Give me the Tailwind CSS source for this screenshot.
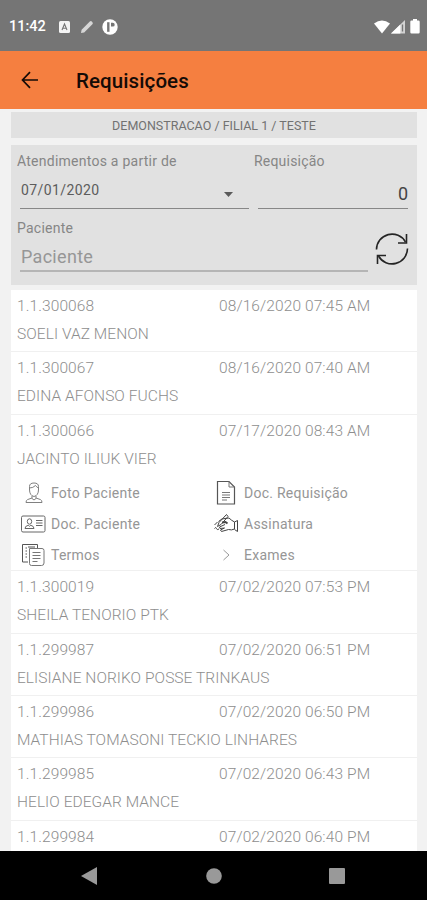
<!DOCTYPE html>
<html lang="pt-BR">
<head>
    <meta charset="UTF-8">
    <meta name="viewport" content="width=device-width, initial-scale=1">
    <title>Requisições</title>
    <script src="https://cdn.jsdelivr.net/npm/@tailwindcss/browser@4"></script>
</head>
<body class="bg-[#f2f2f2] font-['Roboto',sans-serif]">

<div class="w-[427px] h-[900px] flex flex-col overflow-hidden">
    <!-- Status bar -->
    <div class="h-[51px] shrink-0 bg-[#757575] flex items-center pl-[9px] pr-[6px] pt-[2px] text-white">
        <span class="w-[50px] text-[14.5px] font-medium">11:42</span>
        <svg class="w-[11px] h-[12px]" viewBox="0 0 11 12">
            <rect width="11" height="12" rx="1.5" fill="#f4f4f4"/>
            <path d="M3 9 5.5 3 8 9M4 7.2h3" fill="none" stroke="#757575" stroke-width="1.1"/>
        </svg>
        <svg class="w-[14px] h-[14px] ml-[10px]" viewBox="0 0 14 14">
            <path d="M1 13l.6-3.2L9.8 1.6a1.4 1.4 0 0 1 2 0l.6.6a1.4 1.4 0 0 1 0 2L4.2 12.4z" fill="#d6d6d6"/>
        </svg>
        <svg class="w-[16px] h-[16px] ml-[8px]" viewBox="0 0 16 16">
            <circle cx="8" cy="8" r="7.7" fill="#fff"/>
            <path d="M6.3 3.2v9.6" stroke="#757575" stroke-width="2.4"/>
            <path d="M9 3.8h1.8a1.9 1.9 0 0 1 0 3.8H9z" fill="#757575"/>
        </svg>
        <svg class="w-[16px] h-[14px] ml-auto" viewBox="0 0 16 14">
            <path d="M0 3.5Q8-2.5 16 3.5L8 13.5z" fill="#fff"/>
        </svg>
        <svg class="w-[14px] h-[14px] ml-px" viewBox="0 0 14 14">
            <path d="M14 0v13.5H0z" fill="#d2d2d2"/>
            <path d="M9.3 4.5V13.5H0z" fill="#fff"/>
            <path d="M11.5 4.5v7" stroke="#757575" stroke-width="1.3"/>
        </svg>
        <svg class="w-[10px] h-[15px] ml-[5px] mr-px" viewBox="0 0 10 15">
            <path d="M3 0h4v1.5h1.5q1.2 0 1.2 1.2v10.5q0 1.3-1.2 1.3h-7Q.3 14.5.3 13.2V2.7q0-1.2 1.2-1.2H3z" fill="#fff"/>
        </svg>
    </div>

    <!-- Toolbar -->
    <header class="h-[58px] shrink-0 bg-[#f57f40] flex items-center pl-[21px] text-[#150b06]">
        <svg class="w-[18px] h-[18px]" viewBox="0 0 18 18" fill="none" stroke="currentColor" stroke-width="1.7">
            <path d="M17 9H1.8M9 1.2 1.5 9 9 16.8"/>
        </svg>
        <h1 class="ml-[37px] pt-[2px] text-[20.5px] leading-6 font-medium tracking-[0.1px]">Requisições</h1>
    </header>

    <main class="flex-1 min-h-0 overflow-hidden flex flex-col pt-[3px] pl-[11px] pr-[10px]">
        <div class="h-[26px] shrink-0 bg-[#e1e1e1] text-center text-[12.5px] leading-[27px] text-[#727272]">DEMONSTRACAO / FILIAL 1 / TESTE</div>

        <!-- Filters -->
        <section class="mt-[7px] h-[140px] shrink-0 bg-[#e1e1e1] px-[5px] text-[14px] text-[#868686]">
            <div class="flex h-[64px]">
                <div class="w-[237px] pt-[6px]">
                    <div class="pl-px leading-5 tracking-[0.25px]">Atendimentos a partir de</div>
                    <div class="ml-1 mt-[4px] w-[229px] h-[34px] border-b border-[#878787] flex items-start justify-between pr-4">
                        <span class="pl-px leading-[31px] tracking-[0.4px] text-[#5c5c5c]">07/01/2020</span>
                        <svg class="w-[9px] h-[5px] mt-[17px]" viewBox="0 0 9 5"><path d="M0 0h9L4.500 5z" fill="#5a5a5a"/></svg>
                    </div>
                </div>
                <div class="flex-1 pt-[6px]">
                    <div class="pl-px leading-5 tracking-[0.2px]">Requisição</div>
                    <div class="ml-[5px] mt-[4px] w-[150px] h-[34px] border-b border-[#878787] text-right text-[18px] leading-[37px] text-[#444]">0</div>
                </div>
            </div>
            <div class="flex">
                <div class="w-[352px] pt-[9px]">
                    <div class="pl-px leading-5 tracking-[0.25px]">Paciente</div>
                    <div class="ml-1 pl-px h-[34px] border-b-2 border-[#b5b5b5] text-[18px] leading-[38px] tracking-[0.3px] text-[#969696]">Paciente</div>
                </div>
                <svg class="w-[34px] h-[34px] ml-[7px] mt-[23px]" viewBox="0 0 34 34" fill="none" stroke="#252525" stroke-width="1.6">
                    <path d="M1.5 17.500A15.500 15.500 0 0 1 30.500 10M32.500 16.500A15.500 15.500 0 0 1 3.500 24"/>
                    <path d="M31.500 2v9h-8.500M2.500 32v-8.500h8.500"/>
                </svg>
            </div>
        </section>

        <!-- List -->
        <ul id="list" class="mt-[5px] bg-white text-[15.5px] font-light text-[#8e8e8e]"></ul>
    </main>

    <!-- Android navigation -->
    <nav class="h-[49px] shrink-0 bg-black flex items-center pl-[81px]">
        <svg class="w-[17px] h-[18px]" viewBox="0 0 17 18"><path d="M16 0v18L0 9z" fill="#999"/></svg>
        <svg class="w-[16px] h-[16px] ml-[108px]" viewBox="0 0 16 16"><circle cx="8" cy="8" r="7.8" fill="#999"/></svg>
        <svg class="w-[16px] h-[16px] ml-[107px]" viewBox="0 0 16 16"><rect width="16" height="16" rx="1" fill="#999"/></svg>
    </nav>
</div>

<!-- Actions of the open item -->
<template id="actions">
    <div class="h-[94px] pt-[1.5px] grid grid-cols-[193px_1fr] auto-rows-[31px] items-center pl-[9px] text-[14px] font-normal tracking-[0.25px] text-[#969696]">
        <div class="flex items-center gap-[5px]">
            <svg class="w-[26px] h-[24px]" viewBox="0 0 26 24" fill="none" stroke="#808080">
                <path d="M9.5 9V5.5Q9.5 2 14 2t4.500 3.500V9M9.500 7q3.500 0 6-2.500Q16.500 6 18.500 7M9.500 8.500q0 6 4.500 7 4.500-1 4.500-7M12 15v2.500l2 1.500 2-1.500V15M12 17l-4.500 1.600Q6 19.300 6 21.500h16q0-2.200-1.500-2.900L16 17"/>
            </svg>
            <span>Foto Paciente</span>
        </div>
        <div class="flex items-center gap-[5px]">
            <svg class="w-[26px] h-[26px]" viewBox="0 0 26 26" fill="none" stroke="#777">
                <path d="M4.500 1.500H16l5.500 5.500v17h-17z" stroke="#555" stroke-width="1.2"/>
                <path d="M16 1.500v5.500h5.500M9 12.500h8M9 15h8M9 17.500h8M9 20h5"/>
            </svg>
            <span>Doc. Requisição</span>
        </div>
        <div class="flex items-center gap-[5px]">
            <svg class="w-[26px] h-[20px]" viewBox="0 0 26 20" fill="none" stroke="#666">
                <rect x="1.5" y="2" width="23.5" height="16" rx="1.5"/>
                <ellipse cx="9.5" cy="7.5" rx="2.2" ry="2.7"/>
                <path d="M5 14.500q0-2.500 3.200-3.200l1.300 1 1.300-1q3.200.7 3.200 3.200zM16 6.500h6.500M16 9h6.500M16 11.500h6.500"/>
            </svg>
            <span>Doc. Paciente</span>
        </div>
        <div class="flex items-center gap-[5px]">
            <svg class="w-[26px] h-[22px]" viewBox="0 0 26 22" fill="none" stroke="#444">
                <!-- pen and scribble -->
                <path d="M13.500 1.500 6 9.500l-1.500 4 3.500-2 7-8zM1.500 12l3-3M1.500 15.500q1.500-2 2 0t2.500.5"/>
                <!-- hand -->
                <path d="M5.500 8.500Q9 5 12 5.500l4-.5q2.500 2.500 5.500 4v7q-3 1.500-6 .5l-7 2-1-1.500 4-2-4.500.5-.5-1.500L12 11.500"/>
                <path d="M9 9.500l3.500-.5 2 1.500" stroke-width="1.800"/>
                <path d="M21.500 9l3-1.500v11l-3-2"/>
            </svg>
            <span>Assinatura</span>
        </div>
        <div class="flex items-center gap-[5px]">
            <svg class="w-[26px] h-[24px]" viewBox="0 0 26 24" fill="none" stroke="#777">
                <path d="M8 19H2.500V1.500h15V5M5.500 5H7M5.500 8H7M5.500 11H7M5.500 14H7M8 4h7" stroke="#555"/>
                <path d="M9.500 5.500H22q2 0 2 2V20q0 2.500-2.500 2.500H11.500q-2 0-2-2zM12.500 9.500h8M12.500 12.500h8M12.500 15.500h8M12.500 18.500h5"/>
            </svg>
            <span>Termos</span>
        </div>
        <div class="flex items-center gap-[5px]">
            <svg class="w-[26px] h-[14px]" viewBox="0 0 26 14" fill="none" stroke="#999"><path d="M10.500 2l5.500 5-5.500 5"/></svg>
            <span>Exames</span>
        </div>
    </div>
</template>

<script>
    const items = [
        { code: "1.1.300068", date: "08/16/2020 07:45 AM", name: "SOELI VAZ MENON" },
        { code: "1.1.300067", date: "08/16/2020 07:40 AM", name: "EDINA AFONSO FUCHS" },
        { code: "1.1.300066", date: "07/17/2020 08:43 AM", name: "JACINTO ILIUK VIER", open: true },
        { code: "1.1.300019", date: "07/02/2020 07:53 PM", name: "SHEILA TENORIO PTK" },
        { code: "1.1.299987", date: "07/02/2020 06:51 PM", name: "ELISIANE NORIKO POSSE TRINKAUS" },
        { code: "1.1.299986", date: "07/02/2020 06:50 PM", name: "MATHIAS TOMASONI TECKIO LINHARES" },
        { code: "1.1.299985", date: "07/02/2020 06:43 PM", name: "HELIO EDEGAR MANCE" },
        { code: "1.1.299984", date: "07/02/2020 06:40 PM", name: "" }
    ];

    document.getElementById('list').innerHTML = items.map(item => `
        <li class="border-b border-[#f0f0f0]">
            <div class="h-[61.4px] pl-[6px] pt-[2px]">
                <div class="flex leading-7 tracking-[0.1px]">
                    <span class="w-[202px]">${item.code}</span>
                    <span>${item.date}</span>
                </div>
                <div class="leading-7 tracking-[0.05px]">${item.name}</div>
            </div>
            ${item.open ? document.getElementById('actions').innerHTML : ''}
        </li>
    `).join('');
</script>

</body>
</html>
